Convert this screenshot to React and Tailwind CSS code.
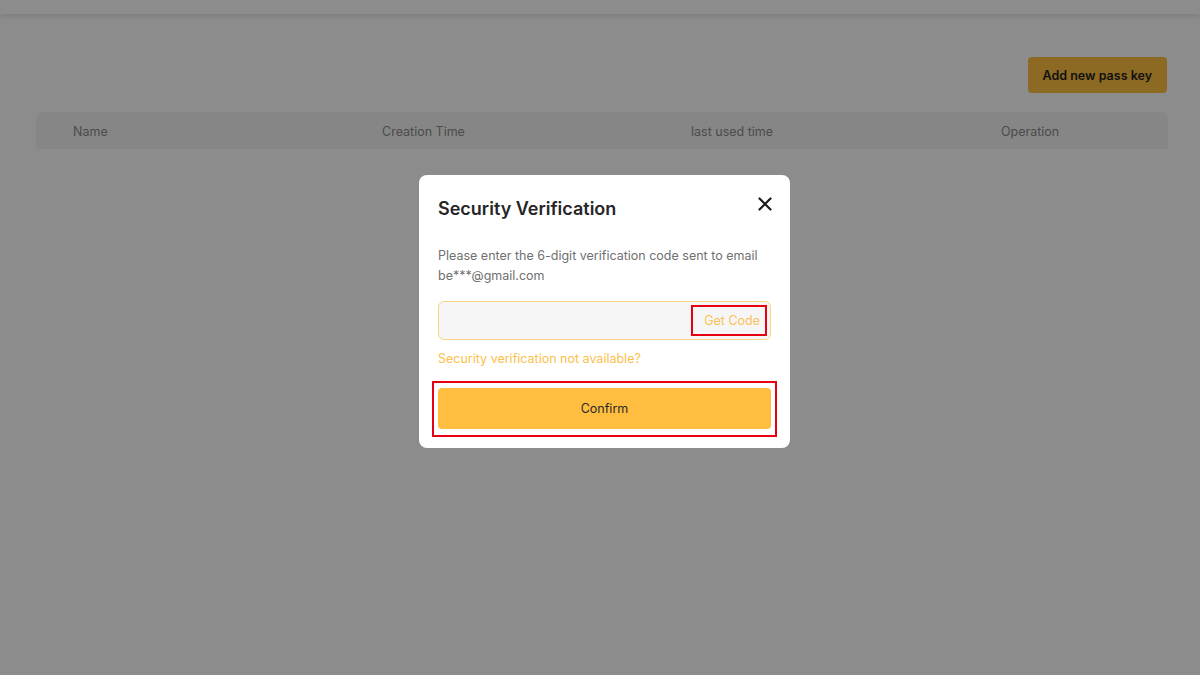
import React from 'react';

const COLUMNS = ['Name', 'Creation Time', 'last used time', 'Operation'];

export default function App() {
  return (
    <div
      className="relative w-[1200px] h-[675px] overflow-hidden bg-white"
      style={{ fontFamily: 'Inter, "Noto Sans", sans-serif' }}
    >
      {/* Top bar */}
      <div className="h-[14px] bg-white shadow-[0_2px_6px_rgba(0,0,0,0.12)]" />

      {/* Page body */}
      <div className="pl-[36px] pr-[32px] pt-[43px]">
        <div className="flex justify-end pr-[1px]">
          <button className="h-[36px] px-[15px] pt-[2px] rounded-[4px] bg-[#ffc140] text-[12.5px] font-semibold text-[#1e1e1e]">
            Add new pass key
          </button>
        </div>
        <div className="mt-[19px] h-[37px] rounded-t-[8px] bg-[#f4f4f4] grid grid-cols-[309px_309px_310px_1fr] items-center pl-[37px] pt-[3px]">
          {COLUMNS.map((c) => (
            <span key={c} className="text-[12.5px] text-[#8a8a8a]">{c}</span>
          ))}
        </div>
      </div>

      {/* Overlay */}
      <div className="absolute inset-0 bg-black/45 flex items-start justify-center pt-[175px] pl-[9px]">
        <div className="w-[371px] rounded-[8px] bg-white px-[19px] pt-[21px] pb-[11px]">
          {/* Header */}
          <div className="flex items-center justify-between">
            <h2 className="text-[18px] font-semibold text-[#262626] leading-[26px]">Security Verification</h2>
            <svg width="14" height="14" viewBox="0 0 14 14" className="-mr-[1px] -mt-[10px]">
              <path d="M1.5 1.5 L12.5 12.5 M12.5 1.5 L1.5 12.5" stroke="#1a1a1a" strokeWidth="2.2" strokeLinecap="round" />
            </svg>
          </div>

          <p className="mt-[24px] text-[12.5px] leading-[20px] text-[#707070]">
            Please enter the 6-digit verification code sent to email be***@gmail.com
          </p>

          {/* Input */}
          <div className="mt-[15px] h-[39px] rounded-[6px] border border-[#fcd37e] bg-[#f6f6f6] flex items-center justify-end pr-[3px]">
            <div className="h-[31px] pl-[11px] pr-[5px] pt-[2px] flex items-center border-2 border-[#e60012]">
              <span className="text-[12.5px] text-[#fcc05a]">Get Code</span>
            </div>
          </div>

          <div className="mt-[9px] text-[12.5px] leading-[20px] text-[#fcc04c]">
            Security verification not available?
          </div>

          {/* Confirm */}
          <div className="mt-[12px] -mx-[6px] border-2 border-[#e60012] px-[4px] pt-[5px] pb-[6px]">
            <button className="w-full h-[41px] pt-[2px] rounded-[4px] bg-[#ffbe40] text-[12.5px] text-[#2a2a2a]">
              Confirm
            </button>
          </div>
        </div>
      </div>
    </div>
  );
}
